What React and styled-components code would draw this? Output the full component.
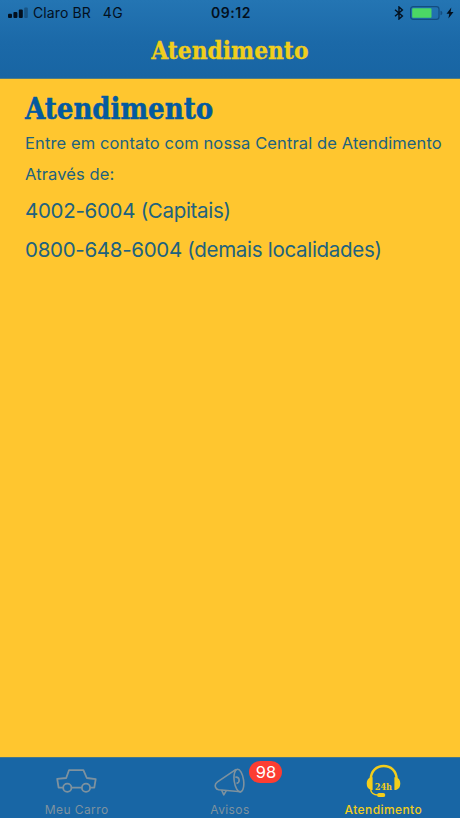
import styled, { createGlobalStyle } from "styled-components";

const App = () => {
	const lines = [
		{ text: "Entre em contato com nossa Central de Atendimento" },
		{ text: "Através de:" },
		{ text: "4002-6004 (Capitais)", large: true },
		{ text: "0800-648-6004 (demais localidades)", large: true },
	];

	const tabs = [
		{ name: "Meu Carro", icon: <CarIcon /> },
		{ name: "Avisos", icon: <MegaphoneIcon />, badge: 98 },
		{ name: "Atendimento", icon: <HeadsetIcon />, active: true },
	];

	return (
		<>
			<GlobalStyle />
			<Screen>
				<Header>
					<StatusBar>
						<Carrier>
							<SignalIcon />
							<span>Claro BR</span>
							<span>4G</span>
						</Carrier>
						<Clock>09:12</Clock>
						<StatusIcons>
							<BluetoothIcon />
							<BatteryIcon />
							<BoltIcon />
						</StatusIcons>
					</StatusBar>
					<NavBar>
						<NavTitle>Atendimento</NavTitle>
					</NavBar>
				</Header>
				<Content>
					<Heading>Atendimento</Heading>
					<Message>
						{lines.map((line) => (
							<Line key={line.text} $large={line.large}>
								{line.text}
							</Line>
						))}
					</Message>
				</Content>
				<TabBar>
					{tabs.map((tab) => (
						<Tab key={tab.name} $active={tab.active}>
							<IconBox>
								{tab.icon}
								{tab.badge && <Badge>{tab.badge}</Badge>}
							</IconBox>
							<TabLabel $active={tab.active}>{tab.name}</TabLabel>
						</Tab>
					))}
				</TabBar>
			</Screen>
		</>
	);
};

export default App;

const SignalIcon = () => (
	<svg width="20" height="12" viewBox="0 0 20 12" fill="#03101e">
		<rect x="0" y="6.8" width="4" height="4.2" rx="1" />
		<rect x="5.4" y="5" width="4" height="6" rx="1" />
		<rect x="10.8" y="2.6" width="4" height="8.4" rx="1" />
		<rect x="16.2" y="0.5" width="3.6" height="10.5" rx="1" opacity="0.3" />
	</svg>
);

const BluetoothIcon = () => (
	<svg width="10" height="14" viewBox="0 0 10 14" fill="none" stroke="#03101e" strokeWidth="1.4">
		<path d="M1 3.8 8.4 10 5 13V1l3.4 3L1 10.2" />
	</svg>
);

const BatteryIcon = () => (
	<svg width="33" height="14" viewBox="0 0 33 14">
		<rect x="0.6" y="0.6" width="28.4" height="12.8" rx="2.6" fill="none" stroke="#134d80" strokeWidth="1.2" />
		<rect x="2.2" y="2.2" width="19.3" height="9.6" rx="0.8" fill="#4bd765" />
		<path d="M30.5 4.8q1.9.5 1.9 2.2t-1.9 2.2z" fill="#134d80" />
	</svg>
);

const BoltIcon = () => (
	<svg width="8" height="12" viewBox="0 0 8 12" fill="#03101e">
		<path d="M5.3.4.5 6.8h2.8L2.4 11.6 7.5 5H4.6z" />
	</svg>
);

const CarIcon = () => (
	<svg width="41" height="27" viewBox="0 0 41 27" fill="none" stroke="currentColor" strokeWidth="1.8" strokeLinejoin="round">
		<path d="M7 19.6H2.6L1.2 10.9 10.2 10 13 2.2h14.4l3.4 7.8 8.9 1.2-1.4 8.4h-4M15.6 19.6h10.1" />
		<circle cx="11.3" cy="19.8" r="4.1" />
		<circle cx="30" cy="19.8" r="4.1" />
	</svg>
);

const MegaphoneIcon = () => (
	<svg width="31" height="28" viewBox="0 0 31 28" fill="none" stroke="currentColor" strokeWidth="1.6" strokeLinejoin="round">
		<path d="M22 1.4 3.5 13.8Q.3 16 1.6 19.4q.8 2 3 2.3L27 23.8" />
		<ellipse cx="24.9" cy="12.6" rx="4.7" ry="11.4" transform="rotate(-8 24.9 12.6)" />
		<path d="M21.3 9.2q3.1-.6 3.8 2.3.6 3-2.6 4M7.6 22.2l2.2 4.6 2.5-4.2" />
	</svg>
);

const HeadsetIcon = () => (
	<svg width="35" height="35" viewBox="0 0 35 35" fill="none" stroke="currentColor">
		<path d="M4.8 14.5C5.2 6.8 10.5 2 17.7 2s12.5 4.8 12.9 12.5" strokeWidth="2.4" />
		<path d="M6.6 13.3v12.6H5Q.7 24.8.7 19.6T5 13.3zM28.4 13.3v12.6H30q4.3-1.1 4.3-6.3T30 13.3z" fill="currentColor" stroke="none" />
		<path d="M4.6 25.5q.8 5.3 7.4 5.5" strokeWidth="1.5" />
		<rect x="11.2" y="28.9" width="7.9" height="4.2" rx="1.7" fill="currentColor" stroke="none" />
		<HeadsetText x="17.4" y="25.6" textLength="17.4" lengthAdjust="spacingAndGlyphs">
			24h
		</HeadsetText>
	</svg>
);

const GlobalStyle = createGlobalStyle`
	* {
		box-sizing: border-box;
	}

	body {
		margin: 0;
		font-family: Inter, "Liberation Sans", sans-serif;
	}
`;

const Screen = styled.div`
	display: flex;
	flex-direction: column;
	height: 100vh;
	background-color: #ffc62f;
	overflow: hidden;
`;

const Header = styled.header`
	height: 79px;
	background: linear-gradient(#2475b3, #1b69a8 55%, #1865a3);
	border-bottom: 1px solid #4f7c82;
`;

const StatusBar = styled.div`
	display: grid;
	grid-template-columns: 1fr auto 1fr;
	align-items: center;
	height: 26px;
	padding: 0 6px 0 8px;
	color: #03101e;
	font-size: 14px;
	line-height: 16px;
`;

const Carrier = styled.div`
	display: flex;
	align-items: center;

	span {
		margin: 0 0 1px 5px;
		letter-spacing: 0.1px;
	}

	span + span {
		margin-left: 12px;
		letter-spacing: 0.4px;
	}
`;

const Clock = styled.div`
	margin-bottom: 1px;
	font-weight: 600;
	letter-spacing: 0.5px;
`;

const StatusIcons = styled.div`
	display: flex;
	align-items: center;
	justify-content: flex-end;

	svg:nth-child(2) {
		margin-left: 6px;
	}

	svg:nth-child(3) {
		margin-left: 3px;
	}
`;

const NavBar = styled.div`
	display: flex;
	align-items: center;
	justify-content: center;
	height: 50px;
`;

const NavTitle = styled.div`
	font-family: "DejaVu Serif Condensed", "DejaVu Serif", serif;
	font-stretch: condensed;
	font-size: 24px;
	font-weight: bold;
	line-height: 30px;
	color: #f0ce1c;
	transform: scaleX(1.01);
	-webkit-text-stroke: 0.3px;
`;

const Content = styled.main`
	flex: 1;
	padding: 11px 0 0 25px;
	color: #20627f;
`;

const Heading = styled.h1`
	margin: 0;
	font-family: "DejaVu Serif Condensed", "DejaVu Serif", serif;
	font-stretch: condensed;
	font-size: 29px;
	line-height: 38px;
	color: #045a9f;
	-webkit-text-stroke: 0.5px;
`;

const Message = styled.div`
	display: grid;
	grid-template-rows: 31px 32px 39px 39px;
`;

const Line = styled.p`
	margin: 0;
	font-size: ${(props) => (props.$large ? 20.5 : 16.5)}px;
	line-height: ${(props) => (props.$large ? 39 : 30)}px;
	letter-spacing: ${(props) => (props.$large ? -0.3 : 0.12)}px;
	white-space: nowrap;
`;

const TabBar = styled.nav`
	display: grid;
	grid-template-columns: repeat(3, 1fr);
	height: 61px;
	background-color: #1866a5;
	border-top: 1px solid #47778a;
`;

const Tab = styled.div`
	display: flex;
	flex-direction: column;
	align-items: center;
	padding-top: 6px;
	color: ${(props) => (props.$active ? "#f3cd1b" : "#7e929f")};
`;

const IconBox = styled.div`
	position: relative;
	display: flex;
	align-items: center;
	height: 35px;
`;

const Badge = styled.div`
	position: absolute;
	left: 35px;
	top: -3px;
	width: 33px;
	height: 22px;
	border-radius: 11px;
	background-color: #fc3d32;
	color: #fff;
	font-size: 16.5px;
	line-height: 22px;
	text-align: center;
`;

const TabLabel = styled.div`
	margin-top: 3px;
	font-size: 12px;
	font-weight: ${(props) => (props.$active ? 500 : 400)};
	line-height: 16px;
	letter-spacing: 0.4px;
`;

const HeadsetText = styled.text`
	font-family: "DejaVu Serif", serif;
	font-size: 10px;
	font-weight: bold;
	text-anchor: middle;
	fill: currentColor;
	stroke: none;
`;
